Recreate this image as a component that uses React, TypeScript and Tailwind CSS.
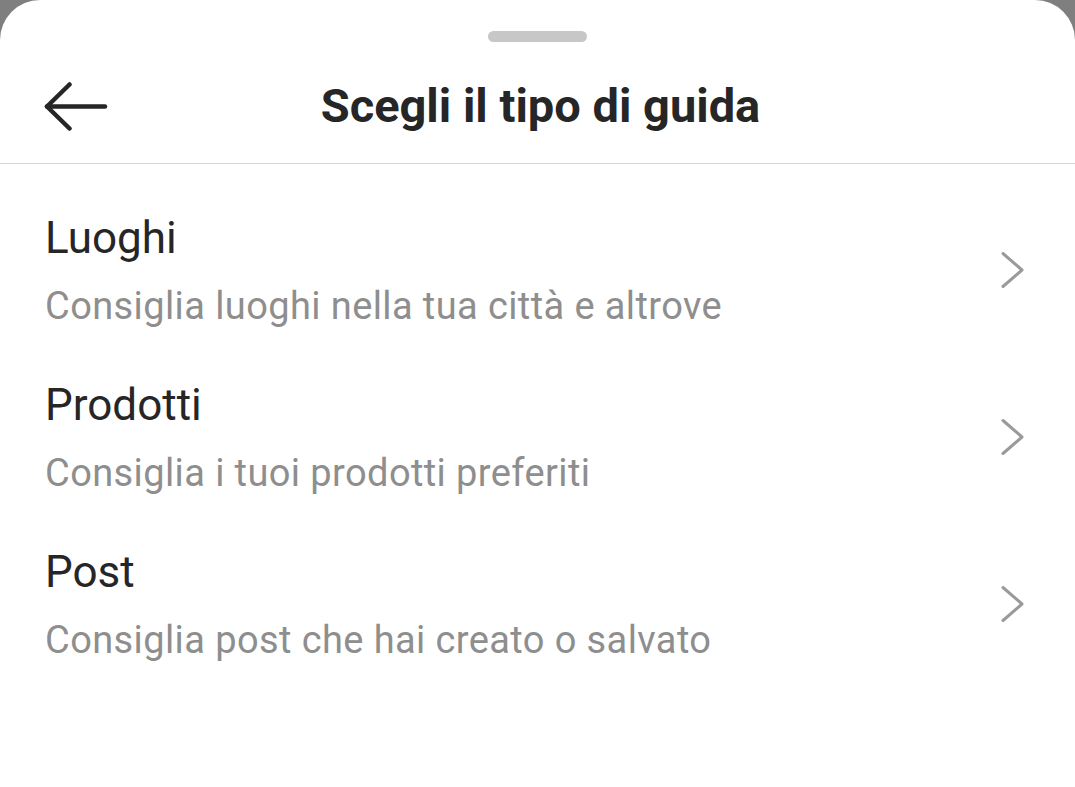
const options = [
  { title: "Luoghi", subtitle: "Consiglia luoghi nella tua città e altrove" },
  { title: "Prodotti", subtitle: "Consiglia i tuoi prodotti preferiti" },
  { title: "Post", subtitle: "Consiglia post che hai creato o salvato" },
];

function BackArrow() {
  return (
    <svg width="64" height="50" viewBox="0 0 64 50" fill="none" stroke="#262626" strokeWidth="4.5" strokeLinecap="round" strokeLinejoin="round">
      <path d="M3 24.5H61" />
      <path d="M25.5 2.5L3 24.5L25.5 46.5" />
    </svg>
  );
}

function Chevron() {
  return (
    <svg width="26" height="38" viewBox="0 0 26 38" fill="none" stroke="#9a9a9a" strokeWidth="3" strokeLinecap="round" strokeLinejoin="round">
      <path d="M3 2.5L22 19L3 35.5" />
    </svg>
  );
}

export default function App() {
  return (
    <div className="min-h-[787px] bg-[#7f7f7f]" style={{ fontFamily: "Roboto, 'Noto Sans', sans-serif" }}>
      <div className="bg-white rounded-t-[40px] min-h-[787px] pt-[31px]">
        <div className="mx-auto h-[11px] w-[99px] rounded-full bg-[#c7c7c7]" />

        <div className="relative mt-[36px] mb-[29px] flex h-[56px] items-center justify-center pl-[6px]">
          <button className="absolute left-[44px] top-[4px]">
            <BackArrow />
          </button>
          <h1 className="text-[47px] leading-[56px] font-bold text-[#262626]">Scegli il tipo di guida</h1>
        </div>
        <div className="border-t border-[#d6d6d6]" />

        <div className="pt-[23px]">
          {options.map((opt) => (
            <div key={opt.title} className="flex items-center justify-between pl-[45px] pr-[49px] pt-[25px] pb-[26px]">
              <div className="flex flex-col gap-[20px]">
                <span className="text-[44px] leading-[52px] text-[#262626]">{opt.title}</span>
                <span className="text-[38px] leading-[44px] tracking-[0.4px] text-[#8e8e8e]">{opt.subtitle}</span>
              </div>
              <Chevron />
            </div>
          ))}
        </div>
      </div>
    </div>
  );
}
